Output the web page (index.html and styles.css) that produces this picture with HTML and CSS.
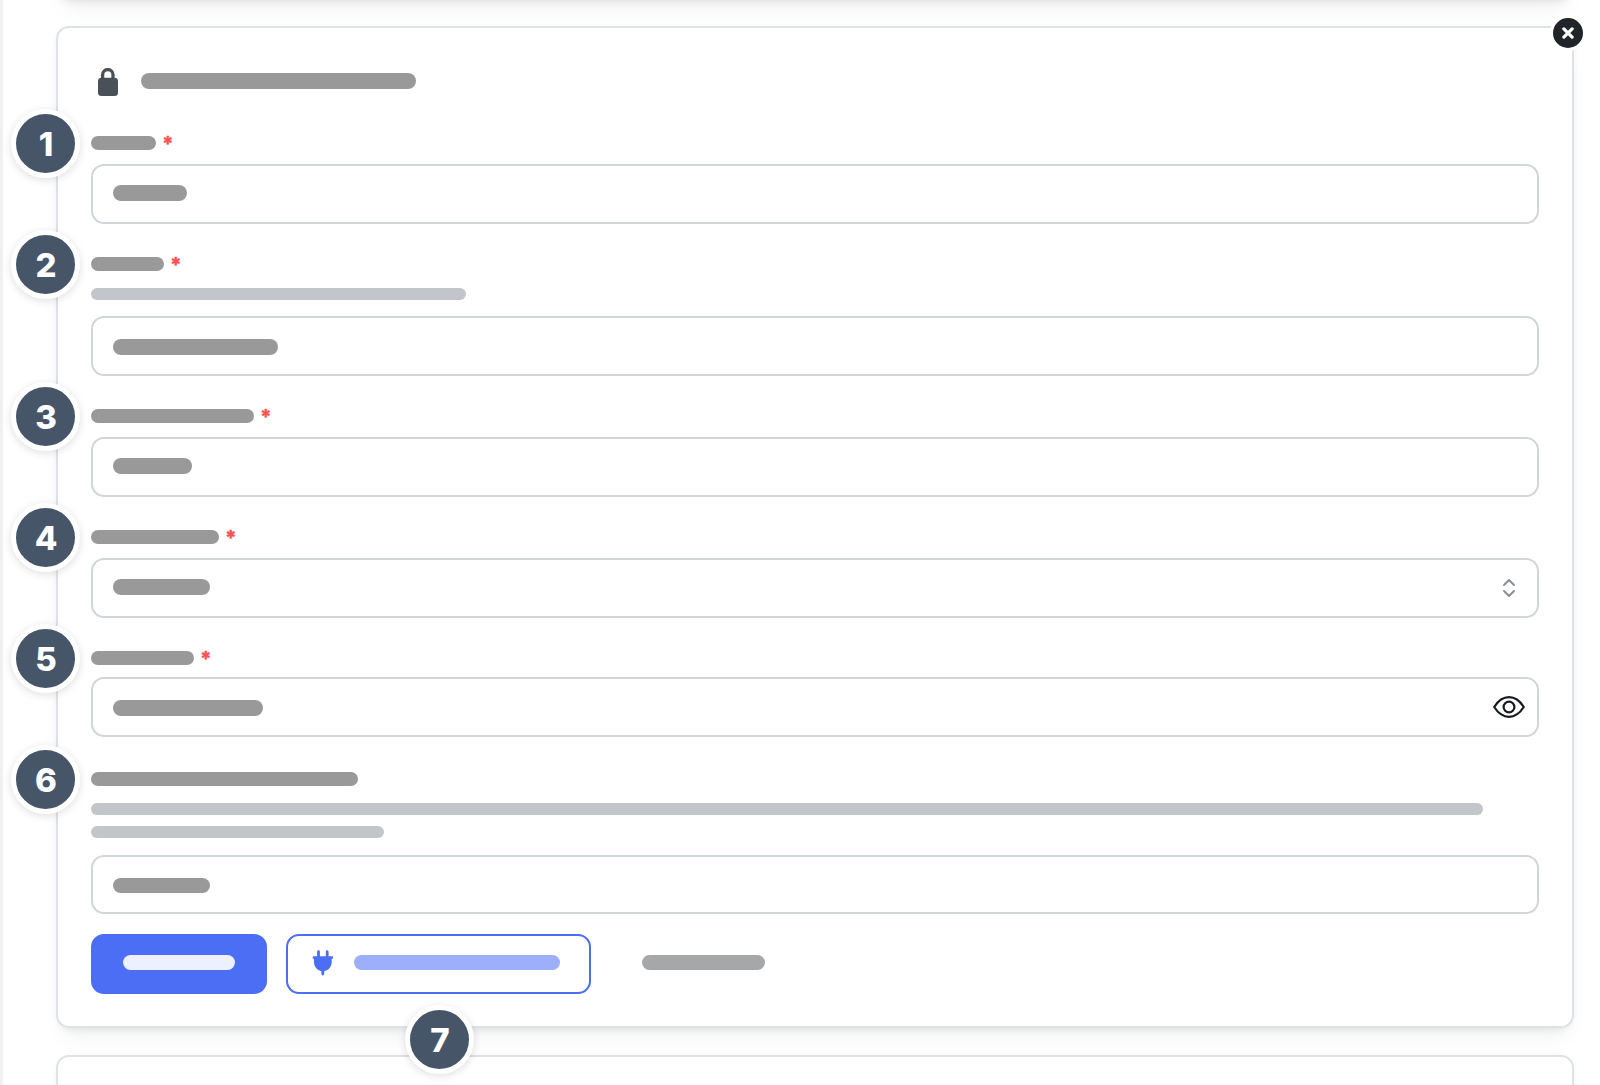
FILE: index.html
```
<!DOCTYPE html>
<html>
<head>
	<meta charset="utf-8"/>
	<title>Connection form</title>
	<link rel="stylesheet" href="styles.css">
</head>
<body>
	<div class="card card-prev"></div>

	<div class="card card-main">
		<div class="close">
			<svg width="12" height="12" viewBox="0 0 12 12"><path d="M1.900 1.900L10.100 10.100M10.100 1.900L1.900 10.100" stroke="#fff" stroke-width="3.300" stroke-linecap="round"/></svg>
		</div>

		<div class="title">
			<svg class="lock" width="20" height="28" viewBox="0 0 20 28">
				<path d="M4.600 11V6.800a5.200 5.200 0 0 1 10.400 0V11" fill="none" stroke="#495057" stroke-width="3.300"/>
				<rect x="0" y="9.800" width="20" height="18.200" rx="3.500" fill="#495057"/>
			</svg>
			<div class="bar title-bar"></div>
		</div>

		<div class="field">
			<div class="badge">1</div>
			<div class="label"><div class="bar w65"></div><span class="star">*</span></div>
			<div class="input"><div class="bar w74"></div></div>
		</div>

		<div class="field">
			<div class="badge">2</div>
			<div class="label"><div class="bar w73"></div><span class="star">*</span></div>
			<div class="desc"><div class="line w375"></div></div>
			<div class="input low"><div class="bar w165"></div></div>
		</div>

		<div class="field">
			<div class="badge">3</div>
			<div class="label"><div class="bar w162"></div><span class="star">*</span></div>
			<div class="input"><div class="bar w79"></div></div>
		</div>

		<div class="field">
			<div class="badge">4</div>
			<div class="label"><div class="bar w128"></div><span class="star">*</span></div>
			<div class="input select">
				<div class="bar w97"></div>
				<svg width="12" height="18" viewBox="0 0 12 18"><path d="M1 6L6 1L11 6M1 12L6 17L11 12" fill="none" stroke="#868e96" stroke-width="1.900" stroke-linecap="round" stroke-linejoin="round"/></svg>
			</div>
		</div>

		<div class="field password">
			<div class="badge">5</div>
			<div class="label"><div class="bar w103"></div><span class="star">*</span></div>
			<div class="input">
				<div class="bar w150"></div>
				<svg width="32" height="22" viewBox="0 0 32 22"><path d="M1.200 11C5.500 4.300 10.200 1.200 16 1.200S26.500 4.300 30.800 11C26.500 17.700 21.800 20.800 16 20.800S5.500 17.700 1.200 11Z" fill="none" stroke="#16191d" stroke-width="2.200" stroke-linejoin="round"/><circle cx="16" cy="11" r="5.400" fill="none" stroke="#16191d" stroke-width="2.200"/></svg>
			</div>
		</div>

		<div class="field last">
			<div class="badge">6</div>
			<div class="label"><div class="bar w267"></div></div>
			<div class="desc">
				<div class="line w1392"></div>
				<div class="line w293"></div>
			</div>
			<div class="input"><div class="bar w97"></div></div>
		</div>

		<div class="buttons">
			<div class="btn btn-save"><div class="bar"></div></div>
			<div class="btn btn-test">
				<svg width="22" height="26" viewBox="0 0 22 26">
					<path d="M6.500 1.700V8M15.200 1.700V8M2 7.600H19.800M10.800 19V24" stroke="#4c6ef5" stroke-width="2.800" stroke-linecap="round"/>
					<path d="M2 7.600H19.700V12C19.700 17.500 15.500 21.200 10.850 21.200S2 17.500 2 12Z" fill="#4c6ef5"/>
				</svg>
				<div class="bar"></div>
				<div class="badge">7</div>
			</div>
			<div class="btn-cancel"><div class="bar"></div></div>
		</div>
	</div>

	<div class="card card-next"></div>
</body>
</html>
```
FILE: styles.css
```
* {
	box-sizing: border-box;
}
body {
	margin: 0;
	height: 1085px;
	overflow: hidden;
	background: #fff;
	border-left: 3px solid #f0f0f0;
	padding: 0 26px 0 53px;
	font-family: Inter, "Liberation Sans", sans-serif;
}
svg {
	display: block;
	flex: none;
}
.card {
	position: relative;
	background: #fff;
	border: 2px solid #dee2e6;
	border-radius: 13px;
	box-shadow: 0 1px 5px rgba(0,0,0,.05), 0 16px 24px -8px rgba(0,0,0,.05), 0 11px 11px -8px rgba(0,0,0,.05);
}
.card-prev {
	height: 40px;
	margin-top: -40px;
}
.card-main {
	height: 1002px;
	margin-top: 26px;
	padding: 40px 33px 0;
	z-index: 1;
	background: none;
}
.card-next {
	height: 80px;
	margin-top: 27px;
}
.close {
	position: absolute;
	top: -13px;
	right: -14px;
	width: 36px;
	height: 36px;
	border: 3px solid #fff;
	border-radius: 50%;
	background: #212529;
	display: flex;
	align-items: center;
	justify-content: center;
}

/* placeholders */
.bar {
	height: 14px;
	border-radius: 7px;
	background: #999;
}
.line {
	height: 12px;
	border-radius: 6px;
	background: #c2c6cb;
}
.w65 { width: 65px; }
.w73 { width: 73px; }
.w74 { width: 74px; }
.w79 { width: 79px; }
.w97 { width: 97px; }
.w103 { width: 103px; }
.w128 { width: 128px; }
.w150 { width: 150px; }
.w162 { width: 163px; }
.w165 { width: 165px; }
.w267 { width: 267px; }
.w293 { width: 293px; }
.w375 { width: 375px; }
.w1392 { width: 1392px; }

.title {
	display: flex;
	height: 28px;
	margin-bottom: 40px;
	padding-left: 7px;
}
.title-bar {
	width: 275px;
	height: 16px;
	border-radius: 8px;
	margin: 5px 0 0 23px;
}

/* fields */
.field {
	position: relative;
	margin-bottom: 33px;
}
.label {
	display: flex;
	height: 14px;
	margin-bottom: 14px;
}
.star {
	margin-left: 6px;
	color: #fa5252;
	font-size: 20px;
	font-weight: 800;
	line-height: 16px;
	-webkit-text-stroke: .4px #fa5252;
}
.desc {
	display: grid;
	gap: 11px;
	margin: 17px 0 16px;
}
.input {
	display: flex;
	justify-content: space-between;
	height: 60px;
	padding: 19px 20px 0 20px;
	border: 2px solid #d0d6dc;
	border-radius: 13px;
}
.input .bar {
	height: 16px;
	border-radius: 8px;
}
.input.low {
	padding-top: 21px;
}
.select {
	padding-right: 22px;
}
.password {
	margin-bottom: 35px;
}
.password .label {
	margin-bottom: 12px;
}
.password .input {
	padding: 17px 12px 0 20px;
}
.password .input .bar {
	margin-top: 4px;
}
.last {
	margin-bottom: 20px;
}
.last .desc {
	margin-bottom: 17px;
}
.last .input {
	height: 59px;
	padding-top: 21px;
}
.last .input .bar {
	height: 15px;
}

.badge {
	position: absolute;
	top: -27px;
	left: -80px;
	width: 69px;
	height: 69px;
	padding-left: 1px;
	border: 5px solid #fff;
	border-radius: 50%;
	background: #475569;
	box-shadow: 0 2px 8px rgba(0,0,0,.13);
	color: #fff;
	font-size: 33px;
	font-weight: 800;
	line-height: 60px;
	text-align: center;
}

/* buttons */
.buttons {
	display: flex;
}
.btn {
	position: relative;
	display: flex;
	height: 60px;
	border-radius: 13px;
	border: 2px solid #4c6ef5;
}
.buttons .bar {
	height: 15px;
	border-radius: 8px;
}
.btn-save {
	width: 176px;
	background: #4c6ef5;
	padding: 19px 30px;
}
.btn-save .bar {
	width: 113px;
	background: #edf0fe;
}
.btn-test {
	width: 305px;
	margin-left: 19px;
	padding: 14px 0 0 24px;
}
.btn-test .bar {
	width: 206px;
	margin: 5px 0 0 20px;
	background: #9daefa;
}
.btn-test .badge {
	top: 69px;
	left: 117px;
}
.btn-cancel {
	padding: 21px 0 0 51px;
}
.btn-cancel .bar {
	width: 123px;
	background: #a6a7a8;
}
```
